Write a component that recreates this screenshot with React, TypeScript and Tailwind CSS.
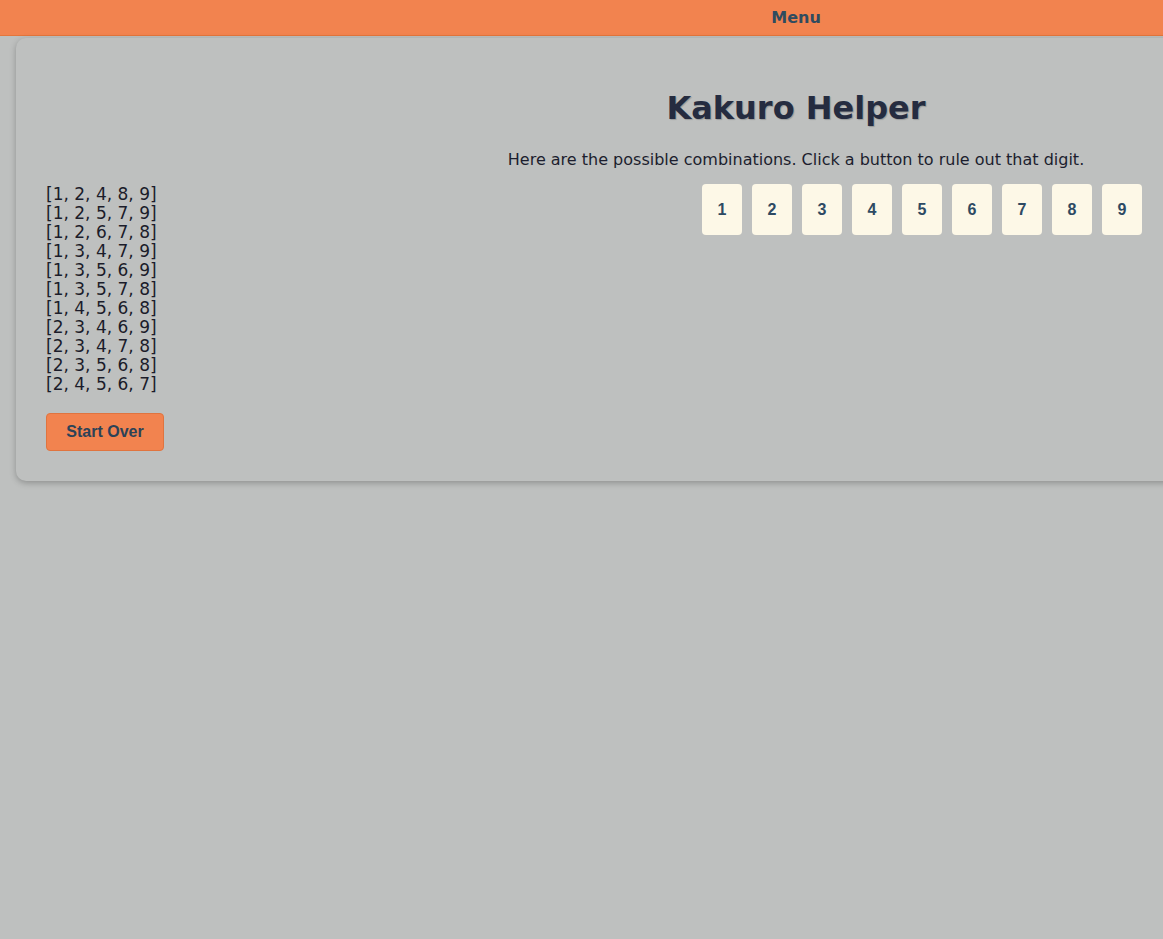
import React from 'react';

const combos = [
  [1, 2, 4, 8, 9],
  [1, 2, 5, 7, 9],
  [1, 2, 6, 7, 8],
  [1, 3, 4, 7, 9],
  [1, 3, 5, 6, 9],
  [1, 3, 5, 7, 8],
  [1, 4, 5, 6, 8],
  [2, 3, 4, 6, 9],
  [2, 3, 4, 7, 8],
  [2, 3, 5, 6, 8],
  [2, 4, 5, 6, 7],
];

const digits = [1, 2, 3, 4, 5, 6, 7, 8, 9];

export default function App() {
  return (
    <div className="min-h-screen w-full overflow-hidden bg-[#bec0bf] font-['DejaVu_Sans',sans-serif]">
      <div className="w-[1592px]">
        {/* Top bar */}
        <header className="flex h-[36px] items-center justify-center border-b border-[#e4763c] bg-[#f2834f]">
          <span className="text-[16px] font-bold text-[#2f4b5f]">Menu</span>
        </header>

        {/* Main card */}
        <main className="mx-4 mt-[2px] rounded-[10px] bg-[#bec0bf] px-[30px] pt-[46px] pb-[30px] shadow-[0_2px_6px_rgba(0,0,0,0.25)]">
          <h1 className="text-center text-[32px] font-bold text-[#252c40] [text-shadow:1px_1px_1px_rgba(0,0,0,0.2)]">
            Kakuro Helper
          </h1>
          <p className="mt-[16px] text-center text-[16px] text-[#1c1e2e]">
            Here are the possible combinations. Click a button to rule out that digit.
          </p>

          <div className="mt-[12px] flex items-start">
            <div className="flex w-[656px] shrink-0 flex-col pt-[1px]">
              <ul className="text-[17px] leading-[19px] text-[#1b1c2a]">
                {combos.map((c) => (
                  <li key={c.join('')}>[{c.join(', ')}]</li>
                ))}
              </ul>
              <div className="mt-[19px]">
                <button className="h-[38px] w-[118px] rounded-[4px] border border-[#e0743f] bg-[#f2834f] font-['Liberation_Sans',sans-serif] text-[16px] font-bold text-[#2c4257]">
                  Start Over
                </button>
              </div>
            </div>

            <div className="flex gap-[10px]">
              {digits.map((d) => (
                <button
                  key={d}
                  className="h-[51px] w-[40px] rounded-[4px] bg-[#fdf8e7] font-['Liberation_Sans',sans-serif] text-[16px] font-bold text-[#2d4a63]"
                >
                  {d}
                </button>
              ))}
            </div>
          </div>
        </main>
      </div>
    </div>
  );
}
